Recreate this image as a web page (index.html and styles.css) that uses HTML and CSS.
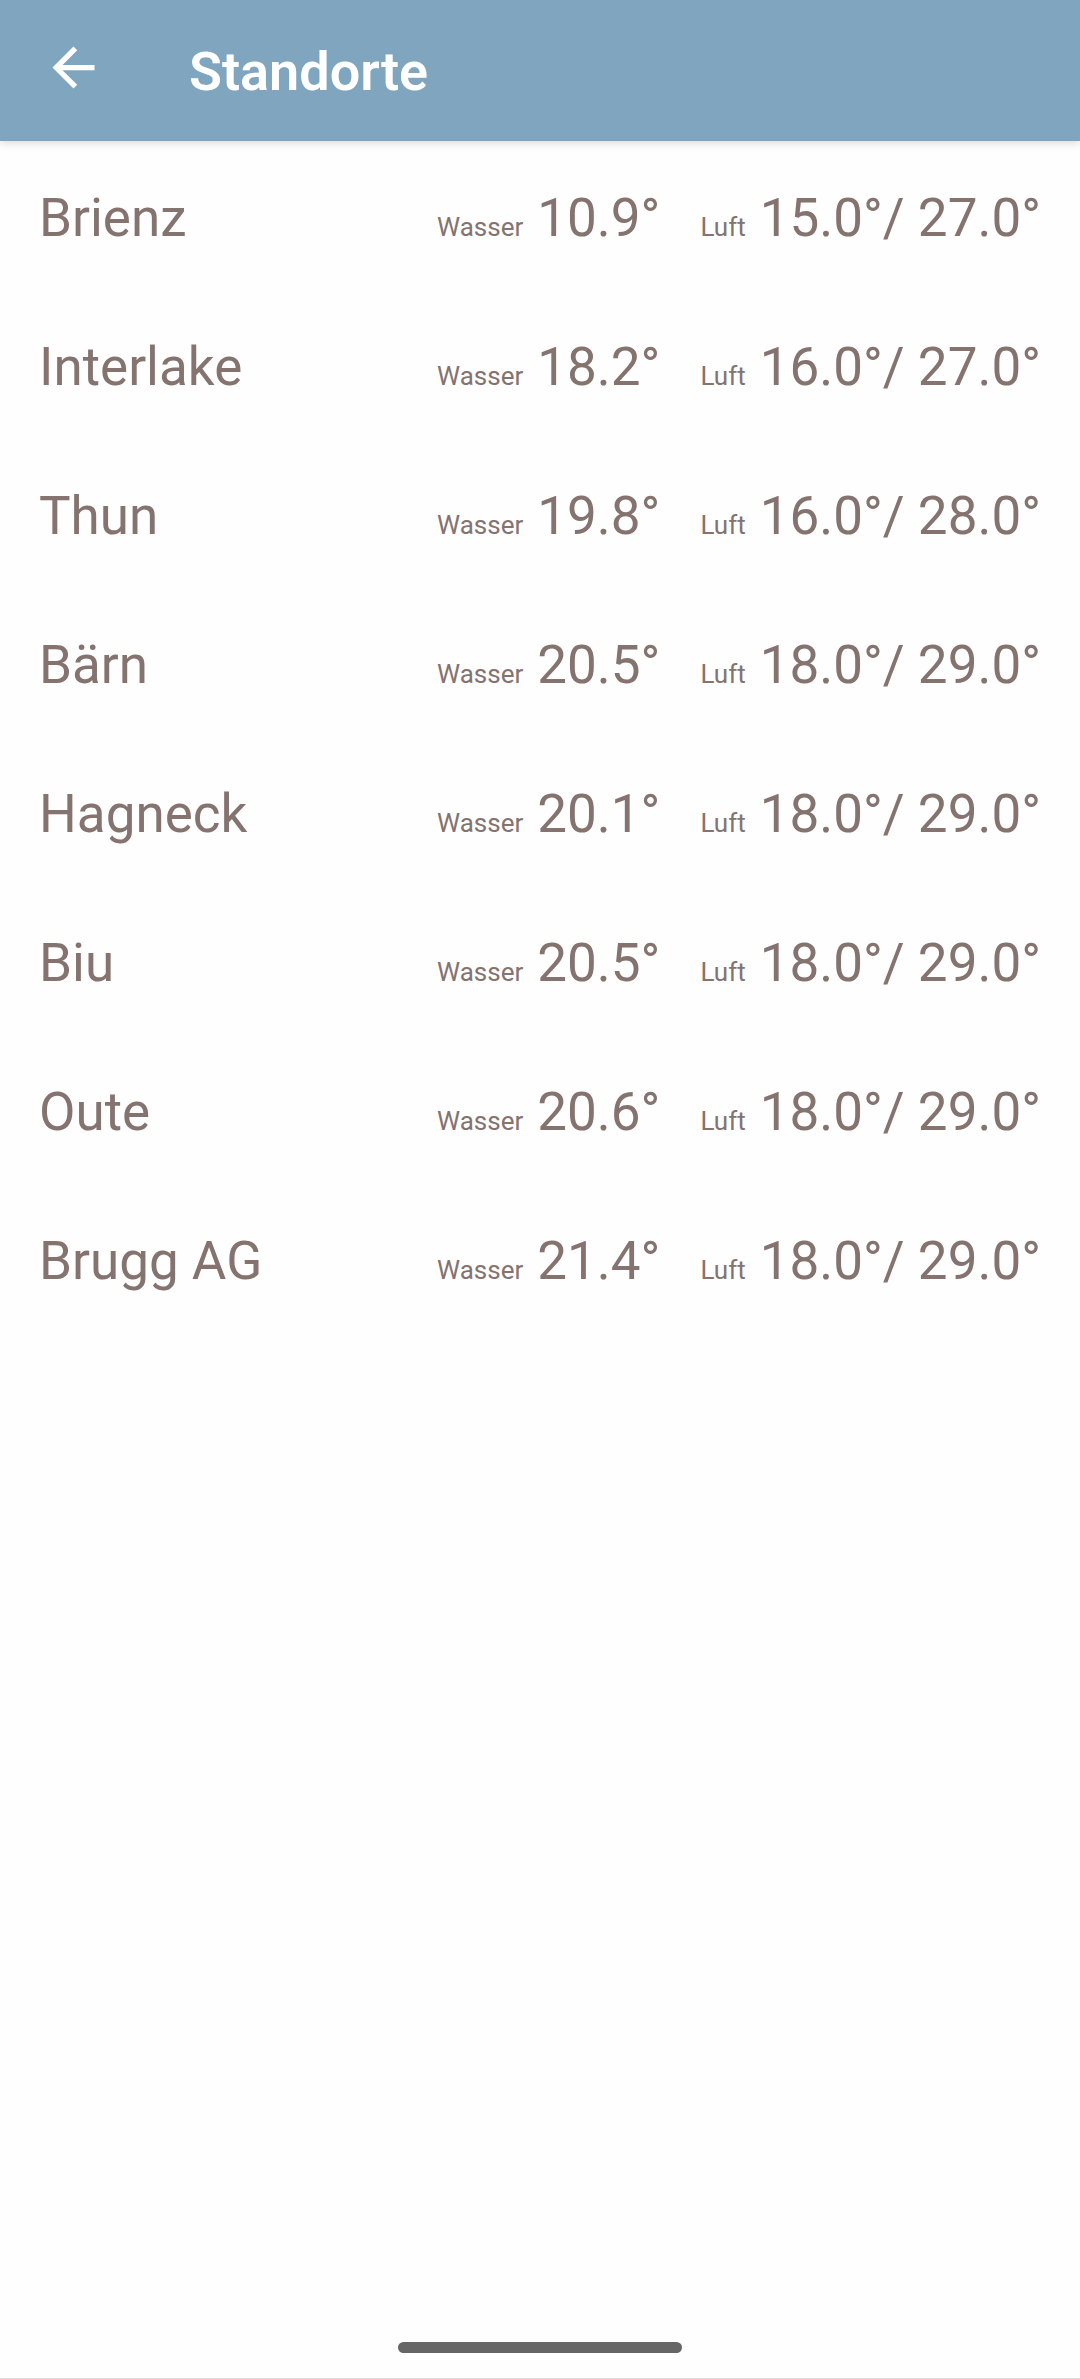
FILE: index.html
```
<!DOCTYPE html>
<html lang="de">
<head>
<meta charset="utf-8">
<meta name="viewport" content="width=device-width, initial-scale=1">
<title>Standorte</title>
<link rel="stylesheet" href="styles.css">
</head>
<body>
<header class="app-bar">
  <button class="back" type="button" aria-label="Zurück">
    <svg class="back-icon" viewBox="0 0 24 24" aria-hidden="true"><path d="M20 11H7.83l5.59-5.59L12 4l-8 8 8 8 1.41-1.41L7.83 13H20v-2z"/></svg>
  </button>
  <h1 class="title">Standorte</h1>
</header>
<main class="content">
  <ul class="locations">
    <li class="location"><span class="name">Brienz</span><span class="label">Wasser</span><span class="water">10.9°</span><span class="label">Luft</span><span class="air">15.0°/ 27.0°</span></li>
    <li class="location"><span class="name">Interlake</span><span class="label">Wasser</span><span class="water">18.2°</span><span class="label">Luft</span><span class="air">16.0°/ 27.0°</span></li>
    <li class="location"><span class="name">Thun</span><span class="label">Wasser</span><span class="water">19.8°</span><span class="label">Luft</span><span class="air">16.0°/ 28.0°</span></li>
    <li class="location"><span class="name">Bärn</span><span class="label">Wasser</span><span class="water">20.5°</span><span class="label">Luft</span><span class="air">18.0°/ 29.0°</span></li>
    <li class="location"><span class="name">Hagneck</span><span class="label">Wasser</span><span class="water">20.1°</span><span class="label">Luft</span><span class="air">18.0°/ 29.0°</span></li>
    <li class="location"><span class="name">Biu</span><span class="label">Wasser</span><span class="water">20.5°</span><span class="label">Luft</span><span class="air">18.0°/ 29.0°</span></li>
    <li class="location"><span class="name">Oute</span><span class="label">Wasser</span><span class="water">20.6°</span><span class="label">Luft</span><span class="air">18.0°/ 29.0°</span></li>
    <li class="location"><span class="name">Brugg AG</span><span class="label">Wasser</span><span class="water">21.4°</span><span class="label">Luft</span><span class="air">18.0°/ 29.0°</span></li>
  </ul>
</main>
<footer class="nav-bar"><div class="handle"></div></footer>
</body>
</html>
```
FILE: styles.css
```
* { box-sizing: border-box; }
body {
  margin: 0;
  min-height: 100vh;
  display: flex;
  flex-direction: column;
  background: #fefefe;
  color: #84736f;
  font-family: Roboto, sans-serif;
}
.app-bar {
  display: flex;
  align-items: flex-start;
  gap: 68px;
  height: 141px;
  padding: 20px 26px;
  background: #80a6bf;
  color: #fff;
  box-shadow: 0 2px 8px rgba(0, 0, 0, 0.15);
}
.back {
  display: flex;
  padding: 16px;
  border: 0;
  background: none;
  color: inherit;
}
.back-icon { width: 63px; height: 63px; fill: currentColor; }
.title {
  margin: 0;
  font-size: 54px;
  font-weight: 600;
  line-height: 103px;
}
.content { flex: 1; }
.locations { margin: 0; padding: 0; list-style: none; }
.location {
  display: flex;
  align-items: baseline;
  height: 149px;
  padding: 45px 39px 40px;
  font-size: 53px;
  line-height: 64px;
  white-space: nowrap;
}
.name { flex: 1; }
.label { margin-right: 14px; font-size: 26px; }
.water { margin-right: 40px; }
.nav-bar {
  display: flex;
  justify-content: center;
  padding: 0 0 25px;
  border-bottom: 1px solid #ddd;
}
.handle { width: 284px; height: 11px; border-radius: 6px; background: #666; }
```
